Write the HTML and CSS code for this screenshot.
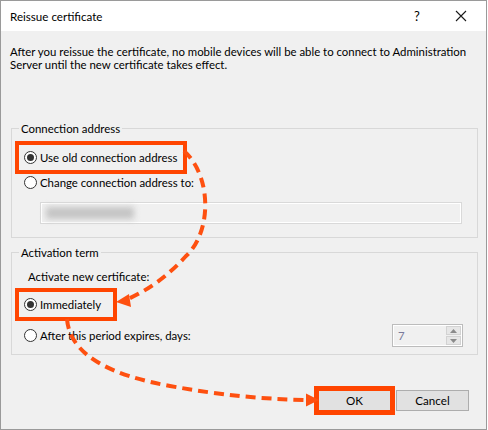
FILE: index.html
```html
<!DOCTYPE html>
<html>
<head>
<meta charset="utf-8">
<link rel="stylesheet" href="styles.css">
</head>
<body>
<div class="window">
  <div class="titlebar">
    <span class="title">Reissue certificate</span>
    <span class="tb-btn help">?</span>
    <span class="tb-btn close">
      <svg width="12" height="12" viewBox="0 0 12 12"><path d="M1 1L11 11M11 1L1 11" stroke="#1a1a1a" stroke-width="1.1" fill="none"/></svg>
    </span>
  </div>
  <div class="content">
    <p class="desc">After you reissue the certificate, no mobile devices will be able to connect to Administration<br>Server until the new certificate takes effect.</p>

    <fieldset class="group g1">
      <legend>Connection address</legend>
      <div class="row first"><span class="opt hl"><span class="radio on"></span>Use old connection address</span></div>
      <div class="row second"><span class="opt"><span class="radio"></span>Change connection address to:</span></div>
      <div class="addr"><span class="blur"></span></div>
    </fieldset>

    <fieldset class="group g2">
      <legend>Activation term</legend>
      <div class="sub">Activate new certificate:</div>
      <div class="row imm"><span class="opt hl hl2"><span class="radio on"></span>Immediately</span></div>
      <div class="row after">
        <span class="opt"><span class="radio"></span>After this period expires, days:</span>
        <div class="spin">
          <span class="val">7</span>
          <span class="arrows">
            <span class="ar up"><svg width="7" height="4" viewBox="0 0 7 4"><path d="M0 4L3.5 0L7 4Z" fill="#8a8a8a"/></svg></span>
            <span class="ar down"><svg width="7" height="4" viewBox="0 0 7 4"><path d="M0 0L3.5 4L7 0Z" fill="#8a8a8a"/></svg></span>
          </span>
        </div>
      </div>
    </fieldset>

    <div class="buttons">
      <button class="btn ok">OK</button>
      <button class="btn">Cancel</button>
    </div>
  </div>

  <svg class="arrows-overlay" width="488" height="430" viewBox="0 0 488 430">
    <path d="M184,151 C212,176 212,232 186,256 C168,276 148,290 128,299" fill="none" stroke="#fe5010" stroke-width="4" stroke-dasharray="10 6"/>
    <path d="M116,302 L129,294 L131,307 Z" fill="#fe5010"/>
    <path d="M67,319 C70,355 110,375 170,386 C220,395 260,399 306,400" fill="none" stroke="#fe5010" stroke-width="4" stroke-dasharray="10 6"/>
    <path d="M319,400 L306,393.5 L306,406.5 Z" fill="#fe5010"/>
  </svg>
</div>
</body>
</html>
```
FILE: styles.css
```css
* { box-sizing: border-box; }
html, body { margin: 0; padding: 0; background: #ffffff; }
body {
  font-family: Lato, "Noto Sans", sans-serif;
  font-size: 11.4px;
  color: #000;
}
.window {
  position: relative;
  width: 487px;
  height: 430px;
  border: 1px solid #9a9a9a;
  background: #f0f0f0;
  overflow: hidden;
}
.titlebar {
  height: 30px;
  background: #ffffff;
  display: flex;
  align-items: center;
  padding-left: 9px;
}
.title { flex: 1; font-size: 11.6px; }
.tb-btn {
  width: 40px;
  display: flex;
  justify-content: center;
  align-items: center;
}
.help { font-size: 13px; margin-right: 4px; }
.close { margin-right: 5px; }
.content { padding: 0 9px; }
.desc {
  margin: 14px 0 0 0;
  line-height: 13px;
  white-space: nowrap;
}
.group {
  margin: 0;
  border: 1px solid #d8d8d8;
  padding: 0 14px 0 12px;
  width: 467px;
  margin-left: 1px;
}
.group legend {
  padding: 0 2px;
  margin-left: -5px;
  line-height: 15px;
}
.g1 { margin-top: 50px; height: 117px; }
.g2 { margin-top: 7px; height: 110px; }
.row {
  display: flex;
  align-items: center;
  height: 17px;
}
.row.first { margin-top: 13px; }
.row.second { margin-top: 8px; }
.opt {
  display: inline-flex;
  align-items: center;
  height: 17px;
  white-space: nowrap;
}
.radio {
  width: 13px;
  height: 13px;
  border: 1px solid #333;
  border-radius: 50%;
  background: #fff;
  margin-right: 3px;
  display: inline-flex;
  align-items: center;
  justify-content: center;
}
.radio.on::after {
  content: "";
  width: 7px;
  height: 7px;
  border-radius: 50%;
  background: #333;
}
.hl {
  padding: 0 2px 0 1px;
  margin-left: -1px;
  outline: 4px solid #ff4500;
  outline-offset: 4px;
}
.addr {
  margin: 11px 0 0 16px;
  height: 22px;
  width: 422px;
  border: 1px solid #d9d9d9;
  box-shadow: inset 0 0 0 1px #fff;
  background: #f0f0f0;
  padding: 4px 0 0 5px;
}
.blur {
  display: block;
  width: 88px;
  height: 12px;
  background: #c4c4c4;
  filter: blur(3px);
}
.sub { margin: 8px 0 0 4px; height: 17px; line-height: 17px; }
.row.imm { margin-top: 11px; }
.hl2 { padding-right: 8px; }
.row.after {
  margin-top: 11px;
  height: 23px;
  justify-content: space-between;
}
.spin {
  width: 71px;
  height: 23px;
  border: 1px solid #bcbcbc;
  background: #f0f0f0;
  display: flex;
  align-items: stretch;
  box-shadow: inset 0 0 0 1px #fff;
}
.val {
  flex: 1;
  color: #7a7a9a;
  padding-left: 5px;
  line-height: 21px;
}
.arrows {
  width: 16px;
  display: flex;
  flex-direction: column;
  gap: 1px;
  padding: 1px 1px 1px 0;
}
.ar {
  flex: 1;
  background: #e6e6e6;
  border: 1px solid #d2d2d2;
  display: flex;
  align-items: center;
  justify-content: center;
}
.buttons {
  display: flex;
  justify-content: flex-end;
  gap: 5px;
  margin-top: 35px;
  padding-right: 8px;
}
.btn {
  font-family: Lato, "Noto Sans", sans-serif;
  font-size: 11.6px;
  width: 73px;
  height: 21px;
  background: #e1e1e1;
  border: 1px solid #adadad;
  padding: 0;
  color: #000;
}
.btn.ok {
  outline: 4px solid #ff4500;
  outline-offset: 0;
  border-color: #ff4500;
}
.arrows-overlay {
  position: absolute;
  left: -1px;
  top: -1px;
  pointer-events: none;
}
```
